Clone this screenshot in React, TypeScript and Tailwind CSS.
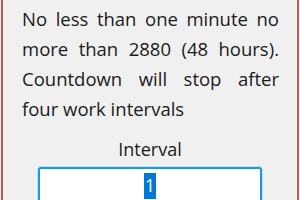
import React from "react";

const J = "block whitespace-nowrap text-justify [text-align-last:justify]";

export default function App() {
  return (
    <div className="w-[300px] h-[200px] bg-[#f0f0f0] px-[1px] overflow-hidden">
      <div className="h-full border-x-2 border-[#c0585c] bg-[#f0f0f0] overflow-hidden" style={{ fontFamily: '"Open Sans", "Noto Sans", sans-serif' }}>
        <div className="ml-[19px] mr-[18px] mt-[4px] text-[18.5px] leading-[30px] text-[#1b1b1b]">
          <span className={J}>No less than one minute no</span>
          <span className={J}>more than 2880 (48 hours).</span>
          <span className={J}>Countdown will stop after</span>
          <span className="block whitespace-nowrap">four work intervals</span>
        </div>
        <div className="mt-[13px] text-center text-[18px] leading-[24px] text-[#1b1b1b]">Interval</div>
        <div className="mt-[6px] ml-[35px] w-[224px] h-[40px] rounded-[3px] border-2 border-[#1a9bd7] bg-white shadow-[0_0_0_1px_#bfe3f4] flex justify-center pt-[4px]">
          <span className="bg-[#0078d7] text-white text-[18px] leading-[24px] px-[1px] h-[26px]">1</span>
        </div>
      </div>
    </div>
  );
}
